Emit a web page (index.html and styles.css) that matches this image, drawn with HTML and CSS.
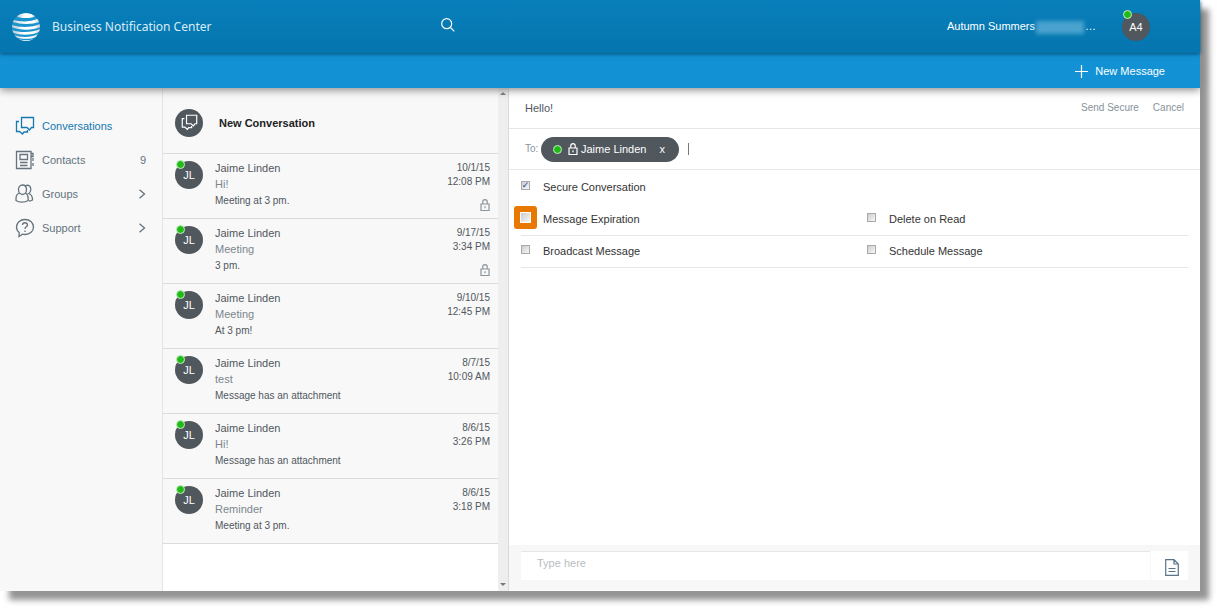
FILE: index.html
```html
<!DOCTYPE html>
<html lang="en">
<head>
<meta charset="utf-8">
<title>Business Notification Center</title>
<link rel="stylesheet" href="styles.css">
</head>
<body>
<svg class="defs" width="0" height="0" aria-hidden="true">
  <symbol id="chat" viewBox="0 0 20 20"><path d="M6.500 1.500H18.500V11.500H16.500L14.500 14L12 11.500H6.500ZM4 5.500H1.500V15.500H4.500L7.500 18L9 16H12.500V14"/></symbol>
  <symbol id="lock" viewBox="0 0 10 12"><path d="M1 5H9V11.500H1ZM2.800 5V2.800A2.200 2.200 0 0 1 7.200 2.800V5M5 7.200V9.200"/></symbol>
  <symbol id="chevron" viewBox="0 0 8 10"><path d="M1.500 .8L6.500 5L1.500 9.200"/></symbol>
</svg>
<div class="app">
  <header class="header">
    <div class="brand">
      <svg class="logo" viewBox="0 0 28 28" aria-hidden="true">
        <defs>
          <clipPath id="globe"><circle cx="14" cy="14" r="14"/></clipPath>
          <linearGradient id="shade"><stop offset="0" stop-color="#b9c7d0"/><stop offset=".4" stop-color="#fff"/><stop offset=".8" stop-color="#fff"/><stop offset="1" stop-color="#c0cdd6"/></linearGradient>
        </defs>
        <g clip-path="url(#globe)">
          <rect width="28" height="28" fill="#1b93cc"/>
          <g fill="url(#shade)">
            <path d="M5 3C8-1 20-1 23 3C22 5.500 6 6 5 3Z"/>
            <path d="M1.500 7C8 9.200 20 9 26 5.500L27.500 9C20 11.500 9 11.500 .5 9Z"/>
            <path d="M0 12C8 15 21 14.500 28 11V14.200C20 17.500 8 17.500 0 14.200Z"/>
            <path d="M0 17C8 20 21 19.700 28 16V18.500C20 22.500 8 22.500 1 19.700Z"/>
            <path d="M2 22C9 24.800 20 24.500 26 21L24.500 24C18 26.500 10 26.300 4 24.500Z"/>
            <path d="M7 26.300C12 27.700 17 27.700 21 26.300V28H7Z"/>
          </g>
        </g>
      </svg>
      <span class="title">Business Notification Center</span>
    </div>
    <button class="search" aria-label="Search"><svg viewBox="0 0 14 14"><circle cx="5.700" cy="5.700" r="5"/><path d="M9.300 9.300L13.300 13.300"/></svg></button>
    <div class="account">
      <span class="user">Autumn Summers<span class="redacted"></span>…</span>
      <span class="avatar">A4<i class="presence"></i></span>
    </div>
  </header>
  <div class="toolbar">
    <button class="new-message"><svg viewBox="0 0 13 13" aria-hidden="true"><path d="M6.500 0V13M0 6.500H13"/></svg>New Message</button>
  </div>
  <div class="panels">
    <nav class="sidebar">
      <a class="nav-item active" href="#"><svg><use href="#chat"/></svg><span>Conversations</span></a>
      <a class="nav-item" href="#"><svg viewBox="0 0 20 20"><path d="M1.500 1.500H16V18.500H1.500ZM5 4.500H12.500V9.500H5ZM5 12.500H12.500M5 15.500H12.500M16 3.500H18V6.500H16M18 8V11M18 13V16"/></svg><span>Contacts</span><span class="count">9</span></a>
      <a class="nav-item" href="#"><svg viewBox="0 0 20 20"><path d="M7.500 1C10 1 11.500 3 11.500 5.500C11.500 8 10 10.500 7.500 10.500C5 10.500 3.500 8 3.500 5.500C3.500 3 5 1 7.500 1ZM4.500 9C2 10 1 11.500 1 14.500V16.500C4 18.700 10 18.700 13.200 16.500V14.500C13.200 11.500 12.500 10 10.500 9M10.500 1.700C14 .2 16 2.700 15.800 5.700C15.700 7.500 15 8.800 13.800 9.500C16.500 10.500 17.500 12 17.500 16C16.500 16.700 15 17 14 17"/></svg><span>Groups</span><svg class="chevron"><use href="#chevron"/></svg></a>
      <a class="nav-item" href="#"><svg viewBox="0 0 20 20"><path d="M10 1.500C15 1.500 18.500 5 18.500 9C18.500 13 15 16.500 10 16.500C9 16.500 8.200 16.400 7.500 16.200L4 18.500L4.200 14.500C2.500 13.300 1.500 11.300 1.500 9C1.500 5 5 1.500 10 1.500ZM7.500 7C7.500 4 12.500 4 12.500 7C12.500 8.800 10 8.800 10 11M10 12.500V14"/></svg><span>Support</span><svg class="chevron"><use href="#chevron"/></svg></a>
    </nav>
    <section class="conversations">
      <div class="list">
        <a class="new-conversation" href="#"><span class="avatar"><svg><use href="#chat"/></svg></span>New Conversation</a>
        <article class="row"><span class="avatar">JL<i class="presence"></i></span><div class="summary"><h3>Jaime Linden</h3><h4>Hi!</h4><p>Meeting at 3 pm.</p></div><div class="meta"><time>10/1/15</time><time>12:08 PM</time><svg class="lock"><use href="#lock"/></svg></div></article>
        <article class="row"><span class="avatar">JL<i class="presence"></i></span><div class="summary"><h3>Jaime Linden</h3><h4>Meeting</h4><p>3 pm.</p></div><div class="meta"><time>9/17/15</time><time>3:34 PM</time><svg class="lock"><use href="#lock"/></svg></div></article>
        <article class="row"><span class="avatar">JL<i class="presence"></i></span><div class="summary"><h3>Jaime Linden</h3><h4>Meeting</h4><p>At 3 pm!</p></div><div class="meta"><time>9/10/15</time><time>12:45 PM</time></div></article>
        <article class="row"><span class="avatar">JL<i class="presence"></i></span><div class="summary"><h3>Jaime Linden</h3><h4>test</h4><p>Message has an attachment</p></div><div class="meta"><time>8/7/15</time><time>10:09 AM</time></div></article>
        <article class="row"><span class="avatar">JL<i class="presence"></i></span><div class="summary"><h3>Jaime Linden</h3><h4>Hi!</h4><p>Message has an attachment</p></div><div class="meta"><time>8/6/15</time><time>3:26 PM</time></div></article>
        <article class="row"><span class="avatar">JL<i class="presence"></i></span><div class="summary"><h3>Jaime Linden</h3><h4>Reminder</h4><p>Meeting at 3 pm.</p></div><div class="meta"><time>8/6/15</time><time>3:18 PM</time></div></article>
      </div>
      <div class="scroll-track" aria-hidden="true"><i class="up"></i><i class="down"></i></div>
    </section>
    <main class="compose">
      <div class="subject-bar">
        <input class="subject" aria-label="Subject" value="Hello!">
        <button>Send Secure</button><button>Cancel</button>
      </div>
      <div class="recipients">
        <label for="to">To:</label>
        <span class="chip"><i class="presence"></i><svg class="lock"><use href="#lock"/></svg>Jaime Linden<button aria-label="Remove Jaime Linden">x</button></span>
        <span class="caret"></span><input id="to" class="to">
      </div>
      <div class="options">
        <div class="option-row first"><label><input type="checkbox" checked>Secure Conversation</label></div>
        <div class="option-row ruled"><label><span class="highlight"><input type="checkbox"></span>Message Expiration</label><label><input type="checkbox">Delete on Read</label></div>
        <div class="option-row ruled"><label><input type="checkbox">Broadcast Message</label><label><input type="checkbox">Schedule Message</label></div>
      </div>
      <div class="composer">
        <textarea aria-label="Message" placeholder="Type here"></textarea>
        <button aria-label="Attach file"><svg viewBox="0 0 14 17"><path d="M.7 .7H9L13.300 5V16.300H.7ZM9 .7V5H13.300M3.500 9.500H10.500M3.500 12.500H10.500"/></svg></button>
      </div>
    </main>
  </div>
</div>
</body>
</html>
```

FILE: styles.css
```css
* { box-sizing: border-box; }
body {
  margin: 0;
  min-height: 100vh;
  padding: 0 18px 18px 0;
  display: flex;
  background: #fff;
  color: #444;
  font: 11px/14px "Liberation Sans", Arial, sans-serif;
}
button, input, textarea { font: inherit; color: inherit; border: 0; background: none; padding: 0; margin: 0; }
a { color: inherit; text-decoration: none; }
h3, h4, p { margin: 0; font-weight: normal; }
svg { fill: none; stroke: currentColor; stroke-width: 1.2; flex: none; }
.defs { position: absolute; }

.app { flex: 1; display: flex; flex-direction: column; min-width: 0; box-shadow: 9px 9px 6px #949494; background: #fff; }

.header {
  position: relative;
  z-index: 2;
  display: grid;
  grid-template-columns: 441px auto 1fr;
  align-items: center;
  height: 53px;
  background: linear-gradient(#087fba, #0575ae);
  box-shadow: 0 1px 4px #044e75;
  color: #fff;
}
.brand { display: flex; align-items: center; gap: 12px; padding-left: 12px; }
.logo { width: 28px; height: 28px; stroke: none; }
.title { font: 12px/16px "Noto Sans", sans-serif; color: #d9ecf6; }
.search svg { display: block; width: 14px; height: 14px; margin-bottom: 3px; }
.account { display: flex; justify-content: flex-end; align-items: center; gap: 26px; padding-right: 50px; }
.redacted { display: inline-block; width: 48px; height: 13px; margin: 0 1px; vertical-align: middle; background: #4aa3cf; filter: blur(2px); }
.avatar {
  position: relative;
  display: flex;
  align-items: center;
  justify-content: center;
  width: 28px;
  height: 28px;
  border-radius: 50%;
  background: #50575d;
  color: #fff;
  flex: none;
}
.presence { width: 9px; height: 9px; border: 1px solid #c9ecc5; border-radius: 50%; background: #21bb18; }
.avatar .presence { position: absolute; left: 1px; top: -1px; }
.account .presence { top: -3px; }

.toolbar {
  position: relative;
  z-index: 1;
  display: flex;
  justify-content: flex-end;
  height: 35px;
  padding: 1px 35px 0 0;
  background: #1292d4;
  box-shadow: 0 2px 8px #888;
}
.new-message { display: flex; align-items: center; gap: 7px; color: #fff; }
.new-message svg { width: 13px; height: 13px; }

.panels { flex: 1; display: flex; background: #fff; }
.sidebar {
  width: 163px;
  padding: 21px 16px 0 15px;
  background: #f8f8f8;
  border-right: 1px solid #e4e4e4;
  color: #64737d;
}
.nav-item { display: flex; align-items: center; gap: 7px; height: 34px; }
.nav-item svg { width: 20px; height: 20px; stroke-width: 1.3; margin-bottom: 1px; }
.nav-item span:nth-child(2) { flex: 1; }
.nav-item .chevron { width: 8px; height: 10px; margin: 0; }
.active { color: #1479b1; }

.conversations { width: 346px; display: flex; border-right: 1px solid #d9d9d9; }
.list { flex: 1; }
.new-conversation {
  display: flex;
  align-items: center;
  gap: 16px;
  height: 66px;
  padding: 4px 12px 0;
  border-bottom: 1px solid #d9dcdf;
  background: #f8f8f8;
  color: #222;
  font-weight: bold;
}
.new-conversation .avatar svg { width: 17px; height: 17px; stroke-width: 1.4; }
.row {
  display: flex;
  height: 65px;
  padding: 7px 8px 0 12px;
  border-bottom: 1px solid #d9dcdf;
  background: #f8f8f8;
  color: #50575d;
}
.row .summary { flex: 1; padding-left: 12px; }
.row h3 { font-size: 11px; line-height: 15px; }
.row h4 { font-size: 11px; line-height: 16px; color: #7b868e; }
.row p { font-size: 10px; line-height: 17px; }
.meta { display: flex; flex-direction: column; align-items: flex-end; font-size: 10px; line-height: 14px; }
.lock { width: 10px; height: 12px; }
.meta .lock { margin-top: 10px; color: #8b949a; }
.scroll-track {
  width: 10px;
  display: flex;
  flex-direction: column;
  justify-content: space-between;
  align-items: center;
  padding: 4px 0 5px;
  background: #eee;
}
.up, .down { border: 3px solid transparent; }
.up { border-top: 0; border-bottom-color: #777; }
.down { border-bottom: 0; border-top-color: #777; }

.compose { flex: 1; display: flex; flex-direction: column; min-width: 0; }
.subject-bar {
  display: flex;
  align-items: center;
  gap: 14px;
  height: 41px;
  padding: 0 16px;
  border-bottom: 1px solid #e3e7ea;
  color: #87929a;
  font-size: 10px;
}
.subject { flex: 1; color: #50575d; font-size: 11px; }
.recipients { display: flex; align-items: center; height: 41px; padding: 0 16px; border-bottom: 1px solid #e3e7ea; }
.recipients label { width: 16px; color: #8b949a; font-size: 10px; }
.chip {
  display: flex;
  align-items: center;
  gap: 3px;
  height: 25px;
  padding: 0 14px 0 12px;
  border-radius: 13px;
  background: #50575d;
  color: #fff;
}
.chip .lock { margin-left: 3px; }
.chip button { margin-left: 10px; }
.caret { width: 1px; height: 12px; margin-left: 9px; background: #777; }
.to { flex: 1; min-width: 0; outline: 0; }

.options { flex: 1; padding: 0 12px; color: #333; }
.option-row { display: grid; grid-template-columns: 1fr 1fr; gap: 25px; height: 32px; align-items: center; }
.option-row label { display: flex; align-items: center; gap: 13px; }
.first { height: 34px; }
.ruled { padding-bottom: 2px; border-bottom: 1px solid #e6e6e6; }
input[type=checkbox] {
  appearance: none;
  display: flex;
  align-items: center;
  justify-content: center;
  width: 9px;
  height: 9px;
  margin-bottom: 3px;
  border: 1px solid #aaa;
  background: linear-gradient(135deg, #ccc, #f8f8f8);
}
input[type=checkbox]:checked::after { content: "✓"; color: #26408b; font: bold 9px/9px "DejaVu Sans", sans-serif; }
.highlight { padding: 6px; margin: -7px; margin-bottom: -4px; border-radius: 3px; background: #e87800; }
.highlight input[type=checkbox] { width: 11px; height: 11px; margin: 0; border-color: #fff; }

.composer { display: flex; gap: 1px; padding: 6px 12px 10px; background: #f7f7f7; border-bottom: 1px solid #fff; }
.composer textarea { flex: 1; height: 29px; padding: 4px 16px; border-top: 1px solid #e6e6e6; background: #fff; resize: none; display: block; }
.composer textarea::placeholder { color: #b9bdc0; }
.composer button { display: flex; align-items: center; justify-content: center; width: 37px; padding: 3px 0 0 5px; background: #fff; color: #58738a; }
.composer svg { width: 14px; height: 17px; }
```
